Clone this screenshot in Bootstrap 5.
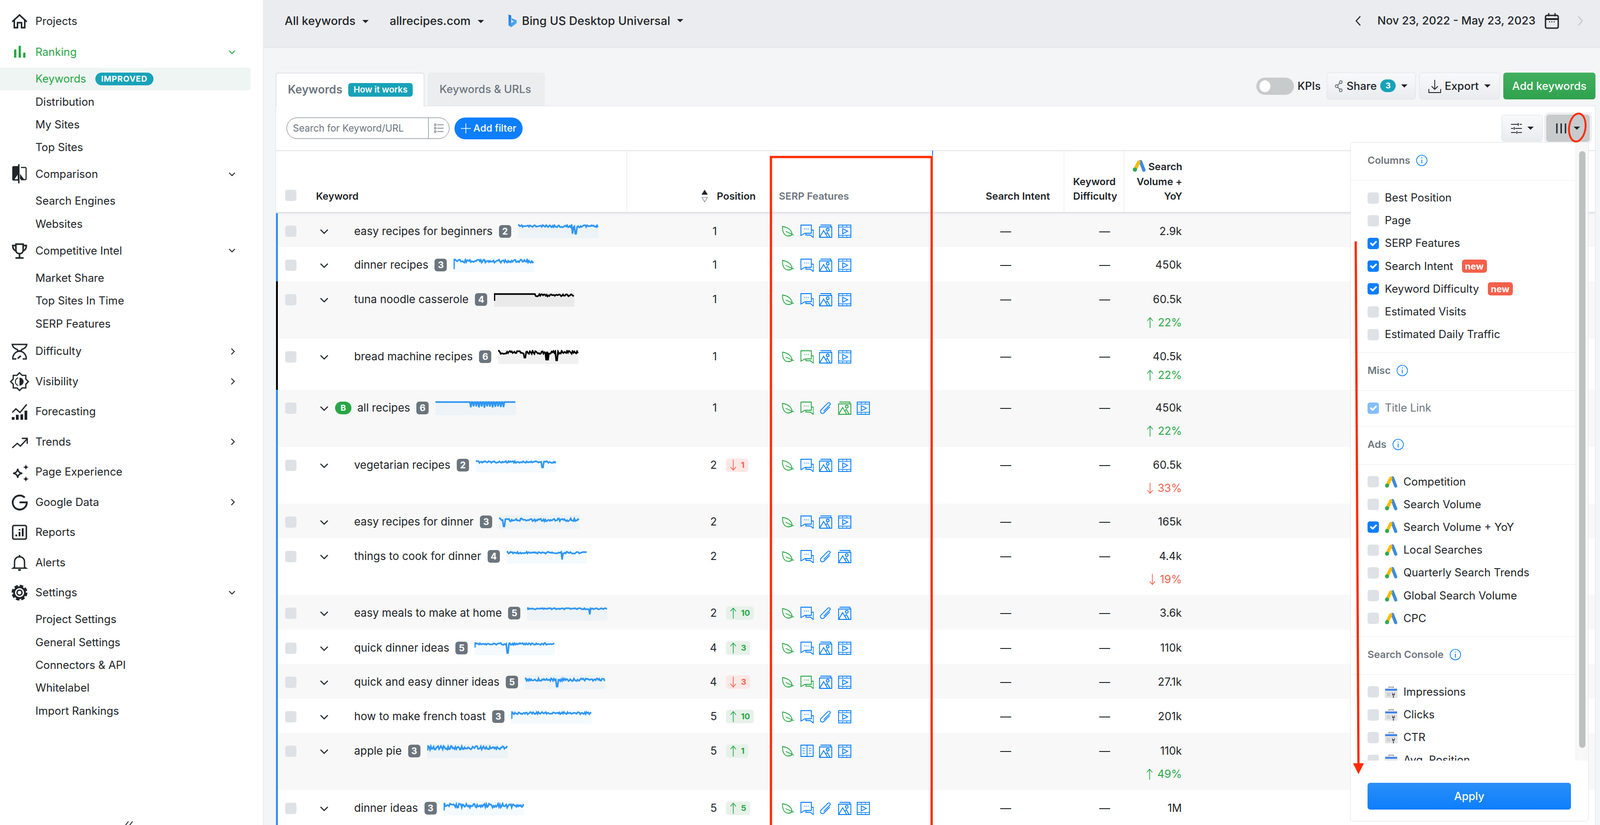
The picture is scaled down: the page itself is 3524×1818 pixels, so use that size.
<!DOCTYPE html>
<html lang="en">
<head>
  <meta charset="UTF-8">
  <meta name="viewport" content="width=device-width, initial-scale=1.0">
  <title>Keywords - Ranking</title>
  <link href="https://cdn.jsdelivr.net/npm/bootstrap@5.3.0/dist/css/bootstrap.min.css" rel="stylesheet">
  <style>
    html, body { height: 100%; overflow: hidden; }
    body { font-family: Inter, "Liberation Sans", sans-serif; font-size: 24px; color: #212529; background: #f4f5f7; position: relative; }

    /* sidebar */
    .side-rail { width: 581px; flex: none; background: #fff; border-right: 2px solid #eceef2; padding-top: 13.5px; position: relative; }
    .side-main { height: 66.5px; padding: 0 61px 0 26px; display: flex; align-items: center; color: #212529; text-decoration: none; }
    .side-main svg.ico { width: 34px; height: 34px; flex: none; margin-right: 18px; overflow: visible; }
    .side-main.on { color: #28a745; }
    .side-main .chev { margin-left: auto; }
    .side-first { margin-bottom: 2px; }
    .side-subs { margin: .5px 0; }
    .side-sub { height: 50.4px; padding-left: 78px; display: flex; align-items: center; color: #212529; text-decoration: none; width: 552px; }
    .side-sub.on { color: #28a745; background: #eef5f3; border-radius: 0 6px 6px 0; }
    .side-new { background: #17a2b8; color: #fff; font-size: 18px; font-weight: 700; letter-spacing: .8px; width: 128px; height: 28px; margin-left: 20px; padding: 0; display: inline-flex; align-items: center; justify-content: center; }
    .side-fold { position: absolute; left: 274px; bottom: -3px; }

    /* top bar */
    .top-strip { height: 105px; background: #ebecef; border-bottom: 2px solid #e1e3e7; padding: 0 36px 11px 46px; }
    .top-pick { font-size: 25.6px; font-weight: 500; color: #212529; text-decoration: none; }
    .top-pick.dropdown-toggle::after { border-top-width: 7.5px; border-left-width: 7px; border-right-width: 7px; margin-left: 15px; vertical-align: 4px; }
    .top-site { margin-left: 46px; }
    .top-engine { margin-left: 53px; }
    .top-bing { margin-right: 11px; }
    .top-date { font-size: 24.8px; font-weight: 500; }
    .top-range { margin: 0 20px 0 36px; }
    .top-next { margin-left: 40px; }

    /* tabs and toolbar */
    .work-area { padding: 55px 10px 0 26px; }
    .tab-row { height: 73px; }
    .nav-tabs.kw-tabs { border-bottom: 0; gap: 7px; }
    .kw-tabs .nav-link { height: 73px; width: 258px; display: flex; align-items: center; padding: 0 0 0 26px; font-weight: 500; color: #6c757d; background: #ecedef; border: 0; border-radius: 6px 6px 0 0; margin: 0; }
    .kw-tabs .nav-link.active { background: #fff; color: #6c757d; font-size: 25px; font-weight: 600; border: 2px solid #e1e3e7; border-bottom: 0; width: 328px; height: 75px; margin-bottom: -2px; position: relative; z-index: 2; padding: 0 0 2px 25px; }
    .how-tag { background: #17a2b8; color: #fff; font-size: 19px; font-weight: 600; border-radius: 6px; height: 30px; width: 142px; margin-left: 13px; display: inline-flex; align-items: center; justify-content: center; padding: 0; }
    .tool-row { gap: 8px; padding-bottom: 14px; }
    .tool-btn { height: 59px; font-size: 24px; font-weight: 500; color: #212529; background: linear-gradient(#f8f9fa, #e9ecef); border: 1px solid #dee2e6; border-radius: 6px; padding: 0; display: inline-flex; align-items: center; justify-content: center; }
    .tool-btn.dropdown-toggle::after { margin-left: 12px; }
    .kpi-switch { width: 83px; height: 38px; background: #c8cbcc; border-radius: 19px; position: relative; }
    .kpi-switch::after { content: ""; position: absolute; left: 7px; top: 6px; width: 24px; height: 26px; background: #fff; border-radius: 50%; }
    .kpi-word { margin-right: 5px; font-weight: 500; }
    .share-btn { width: 196px; }
    .export-btn { width: 177px; }
    .add-btn { width: 203px; height: 59px; font-size: 24px; font-weight: 500; padding: 0; color: #fff; background: linear-gradient(#42b05f, #2fa24e); border: 0; border-radius: 6px; }
    .share-num { background: #17a2b8; color: #fff; width: 34px; height: 28px; border-radius: 14px; font-size: 18px; font-weight: 700; display: inline-flex; align-items: center; justify-content: center; padding: 0; margin-left: 8px; }

    /* panel */
    .kw-panel { background: #fff; border: 1px solid #e1e3e7; border-bottom: 0; position: relative; }
    .filter-row { height: 99px; padding: 0 12px 0 23px; border-bottom: 2px solid #e4e6ea; }
    .kw-search { width: 359px; height: 47px; flex-wrap: nowrap; }
    .kw-search .form-control { height: 47px; border: 1px solid #6c757d; border-radius: 24px 0 0 24px; font-size: 21px; padding: 0 0 0 13px; box-shadow: none; }
    .kw-search .form-control::placeholder { color: #6c757d; }
    .kw-search .input-group-text { width: 47px; flex: none; border: 1px solid #6c757d; background: #fff; padding: 0; justify-content: center; border-radius: 0 24px 24px 0; }
    .filter-btn { width: 150px; height: 48px; margin-left: 11px; padding: 0; font-size: 21.5px; font-weight: 500; background: #0d7efc; border: 0; display: inline-flex; align-items: center; justify-content: center; gap: 6px; }
    .slide-btn { width: 91px; }
    .cols-btn { width: 95px; margin-left: 8px; background: #c8cbcc; border-color: #b9bcbd; box-shadow: 0 0 0 5px #eeeeef; }
    .tool-btn.cols-btn.dropdown-toggle::after { margin-left: 15px; }

    /* table */
    .kw-grid { width: 2905px; table-layout: fixed; margin: 0; --bs-table-bg: transparent; }
    .kw-grid thead th { height: 135px; padding: 0 0 18px; vertical-align: bottom; font-size: 22px; font-weight: 600; line-height: 32.5px; border-bottom: 3px solid #e1e3e7; border-right: 1px solid #e4e6ea; color: #212529; }
    .kw-grid thead th.no-line { border-right: 0; }
    .kw-grid tbody td { padding: 22px 0 0; vertical-align: top; line-height: 36px; border-bottom: 0; color: #212529; }
    .kw-grid tbody tr:nth-child(odd) > td { background: #f8f8f8; }
    .kw-grid tbody td.kw-cell { padding-left: 20px; box-shadow: inset 4px 0 0 #2a8ff0; }
    .kw-grid tbody tr.black-edge td.kw-cell { box-shadow: inset 4px 0 0 #000; }
    .kw-grid tbody tr:first-child > td { background-image: linear-gradient(#eef0f3 3px, transparent 3px); }
    .form-check-input.soft-box { width: 25px; height: 25px; margin: 0; border: 0; border-radius: 5px; background-color: #dee2e6; flex: none; box-shadow: none; }
    .form-check-input.soft-box:checked { background-color: #0d7efc; }
    .form-check-input.head-box { margin-bottom: 3px; }
    .head-cell { padding-left: 20px; }
    .head-label { margin-left: 43px; }
    .kw-grid thead th.head-pos { padding-right: 32px; }
    .kw-grid thead th.head-serp { padding-left: 18px; color: #6c757d; }
    .kw-grid thead th.head-intent, .kw-grid thead th.head-vol { padding-right: 30px; }
    .kw-grid thead th.head-diff { padding-left: 20px; }
    .head-ads { vertical-align: -4px; }
    .kw-line { display: flex; align-items: center; height: 36px; white-space: nowrap; font-size: 24.2px; }
    .kw-chev { margin: 0 57px 0 52px; flex: none; }
    .kw-chev.brand { margin-right: 15px; }
    .brand-pill { background: #28a745; color: #fff; width: 36px; height: 28px; font-size: 18px; font-weight: 700; padding: 0; display: inline-flex; align-items: center; justify-content: center; border-radius: 14px; margin-right: 13px; }
    .kw-count { background: #6c757d; color: #fff; width: 27px; height: 28px; font-size: 20px; font-weight: 700; border-radius: 6px; padding: 0; display: inline-flex; align-items: center; justify-content: center; margin: 0 15px 0 14px; flex: none; }
    .kw-spark { width: 177px; height: 31px; flex: none; display: block; background: rgba(43, 149, 245, .05); }
    .kw-spark.dark { background: rgba(0, 0, 0, .055); }
    .pos-line { display: flex; align-items: center; height: 36px; }
    .pos-num { width: 199px; text-align: right; flex: none; }
    .pos-delta { margin-left: 20px; height: 30px; padding: 0 8px 0 9px; border-radius: 6px; display: inline-flex; align-items: center; gap: 10px; font-size: 18px; font-weight: 700; }
    .pos-delta.up { background: #e7f1ea; color: #28a745; }
    .pos-delta.down { background: #fde8e6; color: #f4604b; }
    .serp-line { display: flex; gap: 12.5px; padding-left: 24px; height: 36px; align-items: center; }
    .serp-line svg { width: 29px; height: 29px; flex: none; fill: none; stroke-width: 1.8; }
    .c-green { stroke: #28a745; }
    .c-blue { stroke: #007bff; }
    .head-end { text-align: right; }
    .vol-up { color: #28a745; }
    .vol-down { color: #f4604b; }
    .vol-pct { display: flex; justify-content: flex-end; align-items: center; gap: 10px; height: 36px; margin-top: 15px; }
    .vol-pct.tight { margin-top: 5px; }
    .kw-grid tbody td.cell-intent { padding-right: 116px; }
    .kw-grid tbody td.cell-diff { padding-right: 30px; }
    .kw-grid tbody td.cell-vol { padding-right: 31px; }
    .sort-mark { display: inline-block; margin-right: 20px; vertical-align: -6px; }

    /* column picker */
    .dropdown-menu.col-picker { display: block; position: absolute; top: 79px; left: 2366px; width: 525px; padding: 0; margin: 0; z-index: 20; font-size: 24px; color: #212529; border: 1px solid #dee2e6; border-radius: 6px; overflow: hidden; }
    .pick-body { height: 1362px; overflow: hidden; }
    .pick-list { width: 495px; flex: none; }
    .pick-head { height: 84px; padding-left: 37px; border-bottom: 1px solid #eceef0; font-size: 22px; font-weight: 600; color: #6c757d; padding-bottom: 4px; gap: 13px; }
    .pick-group { padding: 13px 0 14px; border-bottom: 1px solid #eceef0; }
    .pick-group:last-child { border-bottom: 0; padding-bottom: 25px; }
    .pick-row { height: 50.2px; padding-left: 37px; gap: 13px; white-space: nowrap; }
    .pick-row.off { color: #6c757d; }
    .pick-row svg { width: 28px; height: 28px; flex: none; }
    .pick-new { background: #f4604b; color: #fff; font-size: 20px; font-weight: 700; padding: 0; width: 55px; height: 29px; border-radius: 6px; display: inline-flex; align-items: center; justify-content: center; margin-left: 6px; }
    .pick-rail { flex: 1; background: #f8f8f8; border-left: 1px solid #eceef0; padding: 19px 6px 0 7px; }
    .pick-thumb { height: 1315px; background: #bfc1c1; border-radius: 8px; }
    .pick-foot { padding: 49px 38px 25px 37px; }
    .apply-btn { width: 100%; height: 59px; padding: 0; font-size: 24px; font-weight: 500; background: linear-gradient(#2a8ff8, #0d7efc); border: 0; border-radius: 6px; }

    .mark-layer { position: absolute; left: 0; top: 0; width: 3524px; height: 1818px; z-index: 30; pointer-events: none; }
  </style>
</head>
<body class="d-flex">

  <!-- Sidebar -->
  <aside class="side-rail" id="sideRail"></aside>

  <div class="flex-grow-1">
    <!-- Top bar -->
    <div class="top-strip d-flex align-items-center justify-content-between">
      <div class="d-flex align-items-center">
        <a class="top-pick dropdown-toggle" href="#">All keywords</a>
        <a class="top-pick top-site dropdown-toggle" href="#">allrecipes.com</a>
        <a class="top-pick top-engine dropdown-toggle d-inline-flex align-items-center" href="#">
          <svg class="top-bing" width="20" height="30" viewBox="0 0 20 30">
            <defs><linearGradient id="bingFill" x1="0" y1="0" x2="1" y2="1"><stop offset="0" stop-color="#1b6fe0"/><stop offset="1" stop-color="#5cc0f5"/></linearGradient></defs>
            <path d="M1 1l6 2v17l6-4-4-2-2-5 12 5v6L7 29l-6-4z" fill="url(#bingFill)"/>
          </svg>Bing US Desktop Universal</a>
      </div>
      <div class="d-flex align-items-center top-date">
        <svg width="14" height="24" viewBox="0 0 14 24" fill="none" stroke="#212529" stroke-width="2.4"><path d="M12 2L3 12l9 10"/></svg>
        <span class="top-range">Nov 23, 2022 - May 23, 2023</span>
        <svg width="32" height="36" viewBox="0 0 32 36" fill="none" stroke="#212529" stroke-width="3"><rect x="2" y="6" width="28" height="28" rx="3"/><path d="M2 14h28" stroke-width="4"/><path d="M9 1v7M23 1v7"/><path d="M10 20h2M15 20h2M20 20h2" stroke-width="2.500"/></svg>
        <svg class="top-next" width="14" height="24" viewBox="0 0 14 24" fill="none" stroke="#c4c7cb" stroke-width="2.4"><path d="M2 2l9 10-9 10"/></svg>
      </div>
    </div>

    <div class="work-area">
      <!-- Tabs + toolbar -->
      <div class="tab-row d-flex justify-content-between align-items-end">
        <ul class="nav nav-tabs kw-tabs">
          <li class="nav-item"><a class="nav-link active" href="#">Keywords <span class="badge how-tag">How it works</span></a></li>
          <li class="nav-item"><a class="nav-link" href="#">Keywords &amp; URLs</a></li>
        </ul>
        <div class="tool-row d-flex align-items-center">
          <div class="kpi-switch"></div>
          <span class="kpi-word">KPIs</span>
          <button class="btn tool-btn share-btn dropdown-toggle" type="button">
            <svg width="18" height="26" viewBox="0 0 18 26" fill="none" stroke="#6c757d" stroke-width="1.8" class="me-2"><circle cx="13" cy="4" r="3"/><circle cx="4" cy="13" r="3"/><circle cx="13" cy="22" r="3"/><path d="M11 6l-5 5M6 15l5 5"/></svg>Share<span class="badge share-num">3</span>
          </button>
          <button class="btn tool-btn export-btn dropdown-toggle" type="button">
            <svg width="28" height="30" viewBox="0 0 28 30" fill="none" stroke="#212529" stroke-width="1.8" class="me-2"><path d="M14 1v21M7 15l7 7 7-7M1 21v8h26v-8"/></svg>Export
          </button>
          <button class="btn add-btn" type="button">Add keywords</button>
        </div>
      </div>

      <!-- Panel -->
      <div class="kw-panel">
        <div class="filter-row d-flex align-items-center">
          <div class="input-group kw-search">
            <input type="text" class="form-control" placeholder="Search for Keyword/URL">
            <span class="input-group-text">
              <svg width="21" height="21" viewBox="0 0 21 21" fill="none" stroke="#6c757d" stroke-width="1.4"><circle cx="2.500" cy="3" r="2"/><circle cx="2.500" cy="10.500" r="2"/><circle cx="2.500" cy="18" r="2"/><path d="M7 3h14M7 10.500h14M7 18h14"/></svg>
            </span>
          </div>
          <button class="btn btn-primary rounded-pill filter-btn" type="button">
            <svg width="22" height="22" viewBox="0 0 22 22" fill="none" stroke="#fff" stroke-width="1.6"><path d="M11 0v22M0 11h22"/></svg>Add filter
          </button>
          <button class="btn tool-btn slide-btn dropdown-toggle ms-auto" type="button">
            <svg width="24" height="24" viewBox="0 0 24 24" fill="none" stroke="#343a40" stroke-width="2.2"><path d="M0 3h15M19 3h5M16 0v6M0 12h5M9 12h15M7 9v6M0 21h11M15 21h9M13 18v6"/></svg>
          </button>
          <button class="btn tool-btn cols-btn dropdown-toggle" type="button">
            <svg width="24" height="22" viewBox="0 0 24 22" fill="none" stroke="#212529" stroke-width="3"><path d="M2 0v22M11.500 0v22M21 0v22"/></svg>
          </button>
        </div>

        <table class="table kw-grid">
          <colgroup>
            <col style="width:772px"><col style="width:317px"><col style="width:357px"><col style="width:289px"><col style="width:132px"><col style="width:159px"><col>
          </colgroup>
          <thead>
            <tr>
              <th>
                <div class="head-cell d-flex align-items-center">
                  <input class="form-check-input soft-box head-box" type="checkbox" aria-label="All">
                  <span class="head-label">Keyword</span>
                </div>
              </th>
              <th class="head-end head-pos">
                <svg class="sort-mark" width="14" height="28" viewBox="0 0 14 28"><path d="M7 0l7 11H0z" fill="#212529"/><path d="M1 17h12L7 27z" fill="none" stroke="#6c757d" stroke-width="1.2"/></svg>Position
              </th>
              <th class="head-serp">SERP Features</th>
              <th class="head-end head-intent">Search Intent</th>
              <th class="head-diff">Keyword Difficulty</th>
              <th class="head-end head-vol no-line">
                <svg class="head-ads" width="30" height="27" viewBox="0 0 28 26"><path d="M17 4l7 18" stroke="#3f8bd8" stroke-width="7" stroke-linecap="round"/><path d="M13 5L5 21" stroke="#fbbc04" stroke-width="7" stroke-linecap="round"/><circle cx="5" cy="21" r="4.500" fill="#34a853"/></svg> Search Volume + YoY
              </th>
              <th class="no-line"></th>
            </tr>
          </thead>
          <tbody id="kwBody"></tbody>
        </table>

        <!-- Column picker -->
        <div class="dropdown-menu show col-picker">
          <div class="pick-body d-flex">
            <div class="pick-list" id="pickList"></div>
            <div class="pick-rail"><div class="pick-thumb"></div></div>
          </div>
          <div class="pick-foot"><button class="btn btn-primary apply-btn" type="button">Apply</button></div>
        </div>
      </div>
    </div>
  </div>

  <!-- Red marks drawn over the screenshot -->
  <svg class="mark-layer" viewBox="0 0 3524 1818" fill="none">
    <path d="M2054 332v11" stroke="#007bff" stroke-width="2"/>
    <path d="M1698 1830V346H2052V1830" stroke="#ff2a00" stroke-width="5"/>
    <ellipse cx="3474" cy="281" rx="18" ry="31" transform="rotate(8 3474 281)" stroke="#ff2a00" stroke-width="4"/>
    <path d="M2986 532L2992 1684" stroke="#ff2a00" stroke-width="5"/>
    <path d="M2980 1682h24l-12 24z" fill="#ff2a00"/>
  </svg>

  <script>
    const chevDown = (w, sw, c) => `<svg class="chev" width="${w}" height="${w * 0.62}" viewBox="0 0 18 11" fill="none" stroke="${c}" stroke-width="${sw}"><path d="M1 1l8 8 8-8"/></svg>`;
    const chevRight = `<svg class="chev" width="10" height="15" viewBox="0 0 10 15" fill="none" stroke="#212529" stroke-width="2"><path d="M1.500 1l6.500 6.500L1.500 14"/></svg>`;

    // Iconos del menú lateral
    const sideIcons = {
      home: '<path d="M1 18L17 3l16 15" fill="none" stroke="currentColor" stroke-width="3.400"/><path d="M5.500 15v16h7V20h9v11h7V15" fill="none" stroke="currentColor" stroke-width="3.400"/>',
      bars: '<path d="M5 11h5v18H5zM15 3h5v26h-5zM25 18h5v11h-5z" fill="currentColor"/>',
      compare: '<path d="M14 -1H4a3 3 0 0 0-3 3v26a3 3 0 0 0 3 3h10z" fill="currentColor"/><path d="M15.500 -5v42" stroke="currentColor" stroke-width="3"/><path d="M20 2h9a2.500 2.500 0 0 1 2.500 2.500v22a2.500 2.500 0 0 1-2.500 2.500h-9" fill="none" stroke="currentColor" stroke-width="2.400"/><path d="M13 18v10H6z" fill="#fff"/><path d="M18 16l9 12h-9z" fill="currentColor"/>',
      trophy: '<path d="M9 2h16v13c0 5-3 8-8 8s-8-3-8-8z" fill="none" stroke="currentColor" stroke-width="3.400"/><path d="M9 5H2c0 7 3 11 8 12M25 5h7c0 7-3 11-8 12M17 23v8M8 32.500h18" fill="none" stroke="currentColor" stroke-width="3.400"/>',
      scale: '<path d="M1 2h32c-1 6-6 10-11 11l-1 3h-8l-1-3C7 12 2 8 1 2z" fill="none" stroke="currentColor" stroke-width="3"/><path d="M2 34c0-10 7-17 15-17s15 7 15 17M1 34h9M24 34h9" fill="none" stroke="currentColor" stroke-width="3"/><path d="M13 33l7-6" stroke="currentColor" stroke-width="3.500"/>',
      sun: '<path d="M17 -2.500l5.700 5.600 8.100.1.100 8.100L36.500 17l-5.600 5.700-.1 8.100-8.100.1L17 36.500l-5.700-5.600-8.100-.1-.1-8.100L-2.500 17l5.600-5.700.1-8.100 8.100-.1z" fill="none" stroke="currentColor" stroke-width="2.800"/><path d="M17 8a9 9 0 0 1 0 18z" fill="currentColor"/><path d="M14 8.500a9 9 0 0 0 0 17" fill="none" stroke="currentColor" stroke-width="2"/>',
      forecast: '<path d="M0 29h6v6H0zM9 24h6v11H9zM19 23h6v12h-6zM28 15h6v20h-6z" fill="currentColor"/><path d="M1 19l8-8 9 8L33 1" fill="none" stroke="currentColor" stroke-width="2.800"/>',
      trend: '<path d="M1 30l11-10 7 6 14-15" fill="none" stroke="currentColor" stroke-width="2.800"/><path d="M22 9h12v12" fill="none" stroke="currentColor" stroke-width="2.800"/>',
      spark: '<path d="M13 10c1 6 3 9 10 10-7 1-9 4-10 10-1-6-3-9-10-10 7-1 9-4 10-10z" fill="none" stroke="currentColor" stroke-width="3"/><path d="M31 0c.7 4 2 5.500 6 6.500-4 1-5.300 2.500-6 6.500-.7-4-2-5.500-6-6.500 4-1 5.300-2.500 6-6.500zM31 26c.7 4 2 5.500 6 6.500-4 1-5.300 2.500-6 6.500-.7-4-2-5.500-6-6.500 4-1 5.300-2.500 6-6.500z" fill="currentColor"/>',
      google: '<path d="M28.500 6.500A15.500 15.500 0 1 0 33 17H17" fill="none" stroke="currentColor" stroke-width="4"/>',
      report: '<rect x="2" y="2" width="30" height="30" rx="3" fill="none" stroke="currentColor" stroke-width="3.200"/><path d="M8 22h4v4H8zM15 16h4v10h-4zM15 10h4v3h-4zM22 8h4v18h-4z" fill="currentColor"/>',
      bell: '<path d="M6 27V15C6 8 11 4 17 4s11 4 11 11v12l3 2H3z" fill="none" stroke="currentColor" stroke-width="3"/><path d="M14 33h6M17 0v3" stroke="currentColor" stroke-width="3.500"/>',
      gear: '<circle cx="17" cy="17" r="12" fill="none" stroke="currentColor" stroke-width="4"/><circle cx="17" cy="17" r="5.500" fill="none" stroke="currentColor" stroke-width="3.200"/><circle cx="17" cy="17" r="15" fill="none" stroke="currentColor" stroke-width="5" stroke-dasharray="7.700 4.080"/>'
    };

    const sideMenu = [
      { t: 'Projects', i: 'home', first: true },
      { t: 'Ranking', i: 'bars', on: true, open: true, subs: ['Keywords', 'Distribution', 'My Sites', 'Top Sites'] },
      { t: 'Comparison', i: 'compare', open: true, subs: ['Search Engines', 'Websites'] },
      { t: 'Competitive Intel', i: 'trophy', open: true, subs: ['Market Share', 'Top Sites In Time', 'SERP Features'], pad: 1.5 },
      { t: 'Difficulty', i: 'scale', more: true },
      { t: 'Visibility', i: 'sun', more: true },
      { t: 'Forecasting', i: 'forecast' },
      { t: 'Trends', i: 'trend', more: true },
      { t: 'Page Experience', i: 'spark' },
      { t: 'Google Data', i: 'google', more: true },
      { t: 'Reports', i: 'report' },
      { t: 'Alerts', i: 'bell' },
      { t: 'Settings', i: 'gear', open: true, subs: ['Project Settings', 'General Settings', 'Connectors & API', 'Whitelabel', 'Import Rankings'] }
    ];

    function pintarMenu() {
      const html = sideMenu.map((m) => {
        const arrow = m.open ? chevDown(14, 2.6, m.on ? '#28a745' : '#212529') : (m.more ? chevRight : '');
        const subs = (m.subs || []).map((s) => {
          if (s === 'Keywords') {
            return `<a class="side-sub on" href="#">Keywords<span class="badge rounded-pill side-new">IMPROVED</span></a>`;
          }
          return `<a class="side-sub" href="#">${s.replace('&', '&amp;')}</a>`;
        }).join('');
        return `
          <a class="side-main ${m.on ? 'on' : ''} ${m.first ? 'side-first' : ''}" href="#">
            <svg class="ico" viewBox="0 0 34 34">${sideIcons[m.i]}</svg>${m.t}${arrow}
          </a>
          ${m.subs ? `<div class="side-subs" ${m.pad ? `style="padding:${m.pad}px 0"` : ''}>${subs}</div>` : ''}`;
      }).join('');
      document.getElementById('sideRail').innerHTML = html +
        `<svg class="side-fold" width="20" height="12" viewBox="0 0 20 12" fill="none" stroke="#212529" stroke-width="2"><path d="M9 1L2 10M18 1l-7 9"/></svg>`;
    }

    // Iconos de SERP
    const serpIcons = {
      leaf: '<path d="M2.500 4C2 15 5.500 25 15.500 25c4 0 6-1 8-3C23.500 13 15.500 6 2.500 4z"/><path d="M9.500 15l18 8"/>',
      chat: '<path d="M1 1h23v18H10l-9 5z"/><path d="M24 12h4.500v16.500L22 23H12v-4"/><path d="M8 9.500h1.500M12 9.500h1.500M16 9.500h1.500"/>',
      img: '<path d="M1 5h27v23H1z"/><path d="M3 1h23v4"/><circle cx="19" cy="11" r="3"/><path d="M1 28l9-15 9 15M15 21l3-4 6 11"/>',
      vid: '<rect x="1" y="1" width="27" height="27"/><path d="M1 5.500h27M1 23.500h27" stroke-width="1.400"/><path d="M10 1v4M19 1v4M10 24v4M19 24v4" stroke-width="1.200"/><path d="M10 9l11 5.500L10 20z"/>',
      clip: '<path transform="rotate(45 14.500 14.500)" d="M19 6v18.500a4.500 4.500 0 0 1-9 0V3a3 3 0 0 1 6 0v19"/>',
      book: '<path d="M1 1h27v25H1zM14.500 1v26"/><path d="M5 8h5M5 13.500h5M5 19h5M19 8h5M19 13.500h5M19 19h5" stroke-dasharray="2 1.500"/>'
    };
    const serpSvg = (item) => {
      const [name, tono] = item.split(':');
      const color = name === 'leaf' || tono === 'g' ? 'c-green' : 'c-blue';
      return `<svg viewBox="0 0 29 29" class="${color}">${serpIcons[name]}</svg>`;
    };

    const arrowUp = (c) => `<svg width="14" height="24" viewBox="0 0 14 24" fill="none" stroke="${c}" stroke-width="1.600"><path d="M7 24V1M1 8l6-7 6 7"/></svg>`;
    const arrowDown = (c) => `<svg width="14" height="24" viewBox="0 0 14 24" fill="none" stroke="${c}" stroke-width="1.600"><path d="M7 0v23M1 16l6 7 6-7"/></svg>`;

    // Mini gráficas: se generan siempre igual a partir de una semilla
    function sparkPath(o) {
      let seed = o.s;
      const rnd = () => { seed = (seed * 16807) % 2147483647; return seed / 2147483647; };
      let d = o.head ? `M1 ${o.head}L1 ${o.b}` : `M0 ${o.b}`;
      for (let x = 2; x <= 177; x += 2) {
        const frac = x / 177;
        let y = o.b + (frac >= (o.flat || 0) ? rnd() * (o.n || 0) : 0);
        (o.sp || []).forEach(([at, depth]) => {
          if (Math.abs(frac - at) < 0.009) y = o.b + depth;
        });
        if (o.comb && frac > o.comb[0] && frac < o.comb[1]) y = x % 6 === 0 ? o.b + o.comb[2] - rnd() * 4 : o.b;
        d += `L${x} ${y.toFixed(1)}`;
      }
      return d;
    }

    const filas = [
      { k: 'easy recipes for beginners', n: 2, p: 1, v: '2.9k', h: 76, ic: ['leaf', 'chat', 'img', 'vid'], sp: { s: 11, b: 2, n: 5, sp: [[.68, 19], [.72, 19]] } },
      { k: 'dinner recipes', n: 3, p: 1, v: '450k', h: 76, ic: ['leaf', 'chat', 'img', 'vid'], sp: { s: 23, b: 3, n: 7, head: 24 } },
      { k: 'tuna noodle casserole', n: 4, p: 1, v: '60.5k', pct: 22, h: 126, dark: true, ic: ['leaf', 'chat', 'img', 'vid'], sp: { s: 37, b: 3, n: 5, flat: .5, head: 18 } },
      { k: 'bread machine recipes', n: 6, p: 1, v: '40.5k', pct: 22, tight: true, h: 113, dark: true, ic: ['leaf', 'chat:g', 'img', 'vid'], sp: { s: 41, b: 2, n: 7, sp: [[.33, 15], [.6, 21], [.62, 21], [.73, 21]] } },
      { k: 'all recipes', n: 6, p: 1, v: '450k', pct: 22, h: 126, brand: true, ic: ['leaf', 'chat:g', 'clip', 'img:g', 'vid'], sp: { s: 53, b: 2, comb: [.41, .87, 13] } },
      { k: 'vegetarian recipes', n: 2, p: 2, d: -1, v: '60.5k', pct: -33, h: 125, ic: ['leaf', 'chat', 'img', 'vid'], sp: { s: 61, b: 6, n: 4, sp: [[.83, 14]] } },
      { k: 'easy recipes for dinner', n: 3, p: 2, v: '165k', h: 76, ic: ['leaf', 'chat', 'img', 'vid'], sp: { s: 71, b: 7, n: 7, sp: [[.06, 18], [.36, 4]] } },
      { k: 'things to cook for dinner', n: 4, p: 2, v: '4.4k', pct: -19, h: 125, ic: ['leaf', 'chat', 'clip', 'img'], sp: { s: 83, b: 5, n: 4, sp: [[.69, 17]] } },
      { k: 'easy meals to make at home', n: 5, p: 2, d: 10, v: '3.6k', h: 77, ic: ['leaf', 'chat', 'clip', 'img'], sp: { s: 97, b: 4, n: 3, sp: [[.78, 14]], head: 8 } },
      { k: 'quick dinner ideas', n: 5, p: 4, d: 3, v: '110k', h: 75, ic: ['leaf', 'chat', 'img', 'vid'], sp: { s: 101, b: 4, n: 4, sp: [[.41, 22]], head: 14 } },
      { k: 'quick and easy dinner ideas', n: 5, p: 4, d: -3, v: '27.1k', h: 76, ic: ['leaf', 'chat:g', 'img', 'vid'], sp: { s: 113, b: 7, n: 6, sp: [[.4, 18]] } },
      { k: 'how to make french toast', n: 3, p: 5, d: 10, v: '201k', h: 76, ic: ['leaf', 'chat', 'clip', 'vid'], sp: { s: 127, b: 5, n: 5, head: 20 } },
      { k: 'apple pie', n: 3, p: 5, d: 1, v: '110k', pct: 49, h: 126, ic: ['leaf', 'book', 'img', 'vid'], sp: { s: 131, b: 4, n: 8, head: 14 } },
      { k: 'dinner ideas', n: 3, p: 5, d: 5, v: '1M', h: 90, ic: ['leaf', 'chat', 'clip', 'img', 'vid'], sp: { s: 149, b: 5, n: 9, head: 20 } }
    ];

    function pintarTabla() {
      document.getElementById('kwBody').innerHTML = filas.map((f) => {
        const color = f.dark ? '#000' : '#2b95f5';
        let pos = '';
        if (f.d) {
          const sube = f.d > 0;
          pos = `<span class="pos-delta ${sube ? 'up' : 'down'}">${sube ? arrowUp('#28a745') : arrowDown('#f4604b')}${Math.abs(f.d)}</span>`;
        }
        let pct = '';
        if (f.pct) {
          const sube = f.pct > 0;
          pct = `<div class="vol-pct ${sube ? 'vol-up' : 'vol-down'} ${f.tight ? 'tight' : ''}">${sube ? arrowUp('#28a745') : arrowDown('#f4604b')}${Math.abs(f.pct)}%</div>`;
        }
        return `
          <tr class="${f.dark ? 'black-edge' : ''}" style="height:${f.h}px">
            <td class="kw-cell">
              <div class="kw-line">
                <input class="form-check-input soft-box" type="checkbox" aria-label="${f.k}">
                <span class="kw-chev ${f.brand ? 'brand' : ''}">${chevDown(18, 2.4, '#212529')}</span>
                ${f.brand ? '<span class="badge brand-pill">B</span>' : ''}
                <span>${f.k}</span>
                <span class="badge kw-count">${f.n}</span>
                <svg class="kw-spark ${f.dark ? 'dark' : ''}" viewBox="0 0 177 31" fill="none"><path d="${sparkPath(f.sp)}" stroke="${color}" stroke-width="3.400"/></svg>
              </div>
            </td>
            <td><div class="pos-line"><span class="pos-num">${f.p}</span>${pos}</div></td>
            <td><div class="serp-line">${f.ic.map(serpSvg).join('')}</div></td>
            <td class="text-end cell-intent">—</td>
            <td class="text-end cell-diff">—</td>
            <td class="text-end cell-vol">${f.v}${pct}</td>
            <td></td>
          </tr>`;
      }).join('');
    }

    const adsIcon = '<svg viewBox="0 0 28 26"><path d="M17 4l7 18" stroke="#3f8bd8" stroke-width="7" stroke-linecap="round"/><path d="M13 5L5 21" stroke="#fbbc04" stroke-width="7" stroke-linecap="round"/><circle cx="5" cy="21" r="4.500" fill="#34a853"/></svg>';
    const gscIcon = '<svg viewBox="0 0 28 26"><path d="M9 5V2h10v3" fill="none" stroke="#7a7f85" stroke-width="1.500"/><rect y="4" width="28" height="22" rx="2" fill="#e3e4e6"/><path d="M1 6h26v4H1z" fill="#3b82f0"/><path d="M16 14v4a3 3 0 0 0 6 0v-4h-1v3h-4v-3zM18 20h2v6h-2z" fill="#4a4f55"/><path d="M4 14h8v8H4z" fill="#cfd1d4"/></svg>';
    const infoIcon = '<svg width="25" height="25" viewBox="0 0 25 25" fill="none" stroke="#007bff" stroke-width="1.600"><circle cx="12.500" cy="12.500" r="11.500"/><path d="M12.500 10.500V19M12.500 6v2" stroke-width="1.800"/></svg>';

    const grupos = [
      { head: 'Columns', items: [['Best Position'], ['Page'], ['SERP Features', 1], ['Search Intent', 1, 0, 1], ['Keyword Difficulty', 1, 0, 1], ['Estimated Visits'], ['Estimated Daily Traffic']] },
      { head: 'Misc', items: [['Title Link', 1, 'off']] },
      { head: 'Ads', icon: adsIcon, items: [['Competition'], ['Search Volume'], ['Search Volume + YoY', 1], ['Local Searches'], ['Quarterly Search Trends'], ['Global Search Volume'], ['CPC']] },
      { head: 'Search Console', icon: gscIcon, items: [['Impressions'], ['Clicks'], ['CTR'], ['Avg. Position']] }
    ];

    function pintarColumnas() {
      document.getElementById('pickList').innerHTML = grupos.map((g) => `
        <div class="pick-head d-flex align-items-center">${g.head}${infoIcon}</div>
        <div class="pick-group">
          ${g.items.map(([texto, marcado, off, nuevo]) => `
            <div class="pick-row d-flex align-items-center ${off ? 'off' : ''}">
              <input class="form-check-input soft-box" type="checkbox" aria-label="${texto}" ${marcado ? 'checked' : ''} ${off ? 'disabled' : ''}>
              ${g.icon || ''}<span>${texto}</span>
              ${nuevo ? '<span class="badge pick-new">new</span>' : ''}
            </div>`).join('')}
        </div>`).join('');
    }

    pintarMenu();
    pintarTabla();
    pintarColumnas();
  </script>
  <script src="https://cdn.jsdelivr.net/npm/bootstrap@5.3.0/dist/js/bootstrap.bundle.min.js"></script>
</body>
</html>
